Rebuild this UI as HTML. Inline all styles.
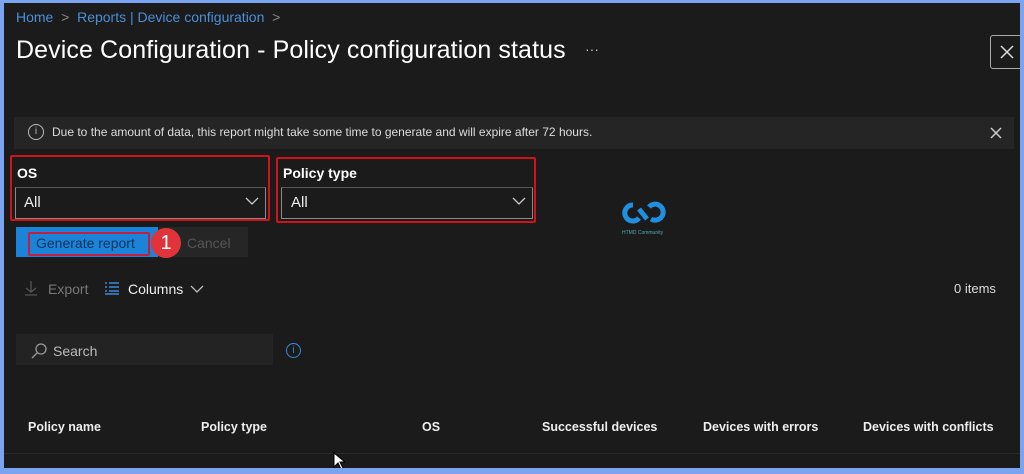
<!DOCTYPE html>
<html><head><style>
body{margin:0;width:1024px;height:474px;background:#7aa3f0;overflow:hidden;font-family:"Liberation Sans",sans-serif;}
#p{position:absolute;left:4px;top:3px;width:1016px;height:465px;background:#1b1b1b;overflow:hidden;}
.a{position:absolute;white-space:nowrap;}
.bx{position:absolute;border:2px solid #d0121b;border-radius:2px;}
.sel{position:absolute;border:1px solid #8a8a8a;background:#1b1b1b;border-top-color:#555;}
.h{font-size:12.5px;color:#eee;font-weight:bold;top:417px}
</style></head><body><div id="p">
<div class="a" style="left:12px;top:6px;font-size:14px;color:#4a8fd8">Home <span style="color:#888">&nbsp;&gt;&nbsp;</span> Reports | Device configuration <span style="color:#888">&nbsp;&gt;</span></div>
<div class="a" style="left:12px;top:33px;font-size:25px;color:#fff;letter-spacing:0.1px">Device Configuration - Policy configuration status</div>
<div class="a" style="left:581px;top:38px;font-size:14px;color:#bbb">···</div>
<div class="a" style="left:986px;top:32px;width:30px;height:32px;border:1px solid #aaa;border-radius:3px"></div>
<svg class="a" style="left:996px;top:42px" width="14" height="14"><path d="M1 1L13 13M13 1L1 13" stroke="#ddd" stroke-width="1.5"/></svg>
<div class="a" style="left:10px;top:114px;width:1000px;height:32px;background:#252525"></div>
<div class="a" style="left:24px;top:121px;width:14px;height:14px;border:1px solid #bbb;border-radius:50%;font-size:10px;color:#bbb;text-align:center;line-height:14px">i</div>
<div class="a" style="left:48px;top:122px;font-size:12px;color:#ddd">Due to the amount of data, this report might take some time to generate and will expire after 72 hours.</div>
<svg class="a" style="left:986px;top:124px" width="12" height="12"><path d="M1 1L11 11M11 1L1 11" stroke="#ccc" stroke-width="1.5"/></svg>
<div class="bx" style="left:6px;top:152px;width:256px;height:62px"></div>
<div class="a" style="left:13px;top:162px;font-size:14px;color:#fff;font-weight:bold">OS</div>
<div class="sel" style="left:11px;top:184px;width:249px;height:30px"></div>
<div class="a" style="left:20px;top:191px;font-size:15px;color:#eee">All</div>
<svg class="a" style="left:241px;top:194px" width="14" height="9"><path d="M1 1L7 7L13 1" stroke="#ccc" fill="none" stroke-width="1.3"/></svg>
<div class="bx" style="left:272px;top:154px;width:256px;height:62px"></div>
<div class="a" style="left:279px;top:162px;font-size:14px;color:#fff;font-weight:bold">Policy type</div>
<div class="sel" style="left:277px;top:184px;width:250px;height:30px"></div>
<div class="a" style="left:287px;top:191px;font-size:15px;color:#eee">All</div>
<svg class="a" style="left:508px;top:194px" width="14" height="9"><path d="M1 1L7 7L13 1" stroke="#ccc" fill="none" stroke-width="1.3"/></svg>
<svg class="a" style="left:615px;top:198px" width="52" height="36" viewBox="0 0 52 36"><path d="M14 4a8 8 0 1 0 6 13M20 8l8 10M32 18a8 8 0 1 0 -2 -12" stroke="#1f8fe0" stroke-width="5" fill="none"/><text x="3" y="33" font-size="5" fill="#5aa" font-family="Liberation Sans">HTMD Community</text></svg>
<div class="a" style="left:12px;top:224px;width:142px;height:30px;background:#1b84d8"></div>
<div class="a" style="left:154px;top:224px;width:90px;height:30px;background:#262626"></div>
<div class="a" style="left:24px;top:229px;width:118px;height:20px;border:2px solid #c02040;border-radius:2px"></div>
<div class="a" style="left:32px;top:232px;font-size:14px;color:#12335a">Generate report</div>
<div class="a" style="left:183px;top:232px;font-size:14px;color:#555">Cancel</div>
<div class="a" style="left:147px;top:225px;width:30px;height:30px;border-radius:50%;background:#e0343a;color:#fff;font-size:20px;text-align:center;line-height:30px">1</div>
<svg class="a" style="left:20px;top:277px" width="14" height="16"><path d="M7 1V12M2 8L7 12L12 8M1 15H13" stroke="#555" fill="none" stroke-width="1.3"/></svg>
<div class="a" style="left:44px;top:278px;font-size:14px;color:#777">Export</div>
<svg class="a" style="left:100px;top:278px" width="16" height="14"><path d="M1 2h2M1 6h2M1 10h2M5 2h10M5 6h10M5 10h10M1 13h14" stroke="#3b8ad9" stroke-width="1.5"/></svg>
<div class="a" style="left:124px;top:278px;font-size:14px;color:#eee">Columns</div>
<svg class="a" style="left:186px;top:282px" width="14" height="9"><path d="M1 1L7 7L13 1" stroke="#bbb" fill="none" stroke-width="1.3"/></svg>
<div class="a" style="left:950px;top:278px;font-size:13px;color:#ddd">0 items</div>
<div class="a" style="left:12px;top:331px;width:257px;height:31px;background:#232323"></div>
<svg class="a" style="left:26px;top:339px" width="18" height="18"><circle cx="11" cy="7" r="5" stroke="#999" fill="none" stroke-width="1.3"/><path d="M7 11L2 16" stroke="#999" stroke-width="1.3"/></svg>
<div class="a" style="left:49px;top:340px;font-size:14px;color:#bbb">Search</div>
<div class="a" style="left:282px;top:340px;width:13px;height:13px;border:1.5px solid #3a8ad9;border-radius:50%;color:#3a8ad9;font-size:10px;text-align:center;line-height:13px">i</div>
<div class="a h" style="left:24px">Policy name</div>
<div class="a h" style="left:197px">Policy type</div>
<div class="a h" style="left:418px">OS</div>
<div class="a h" style="left:538px">Successful devices</div>
<div class="a h" style="left:699px">Devices with errors</div>
<div class="a h" style="left:859px">Devices with conflicts</div>
<div class="a" style="left:0;top:450px;width:1016px;height:1px;background:#2a2a2a"></div>
<svg class="a" style="left:329px;top:449px" width="12" height="18"><path d="M1 1v14l4-4 3 6 2-1-3-6h5z" fill="#fff" stroke="#000"/></svg>
</div></body></html>
